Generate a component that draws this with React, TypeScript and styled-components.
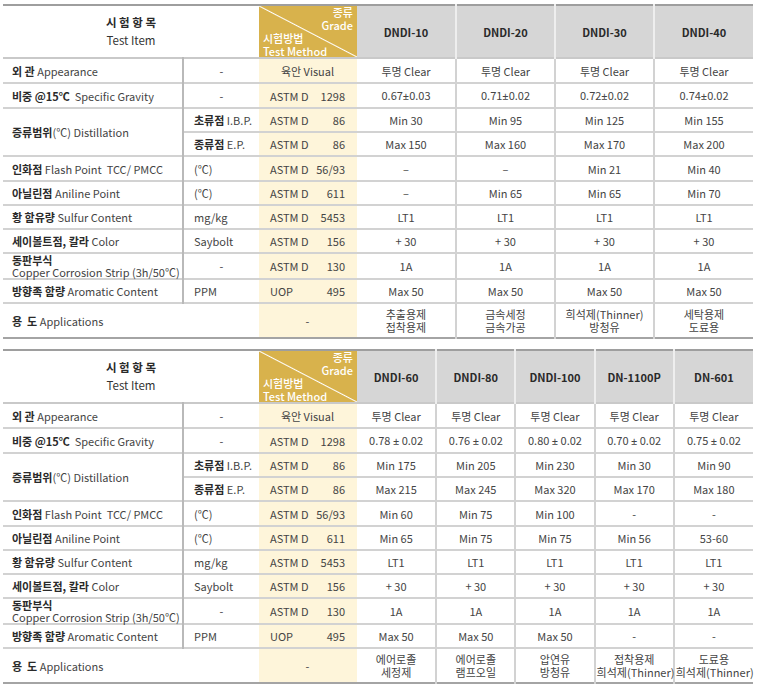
import React from 'react';
import styled, { createGlobalStyle } from 'styled-components';

const Global = createGlobalStyle`
  html, body { margin: 0; padding: 0; background: #fff; }
  body {
    font-family: "Noto Sans CJK KR", "Noto Sans", sans-serif;
    color: #3a3a3a;
    -webkit-font-smoothing: antialiased;
  }
`;

const Page = styled.div`
  width: 750px;
  padding: 4px 0 0 3px;
  display: flex;
  flex-direction: column;
  gap: 10px;
`;

const Table = styled.table`
  width: 750px;
  table-layout: fixed;
  border-collapse: collapse;
  border-top: 2px solid #9e9e9e;
  border-bottom: 2px solid #a4a4a4;
  font-size: 11px;
  line-height: 14px;
`;

const Row = styled.tr<{ $h: number }>`
  height: ${(p) => p.$h}px;
  border-bottom: 2px solid #d2d2d2;
  &:last-child { border-bottom: none; }
`;

const HeadRow = styled.tr`
  height: 51px;
  border-bottom: 2px solid #c9c9c9;
`;

const HeadItem = styled.th`
  font-weight: 400;
  font-size: 11.5px;
  text-align: center;
  line-height: 18px;
  color: #333;
  padding: 0 0 2px 0;
  b { font-weight: 700; color: #2a2a2a; }
`;

const GoldCell = styled.th`
  padding: 0;
  background: linear-gradient(
    to top right,
    #d8b24c calc(50% - 1px),
    #ffffff 50%,
    #d8b24c calc(50% + 1px)
  );
  color: #fff;
  font-weight: 500;
  vertical-align: top;
`;

const GoldInner = styled.div`
  height: 51px;
  box-sizing: border-box;
  padding: 0 4px 0 4px;
  display: flex;
  flex-direction: column;
  justify-content: space-between;
  line-height: 12.5px;
  font-size: 11px;
`;

const GoldTop = styled.div`
  text-align: right;
`;

const GoldBottom = styled.div`
  text-align: left;
`;

const GradeHead = styled.th<{ $first?: boolean }>`
  background: #d6d6d6;
  font-weight: 700;
  font-size: 11px;
  color: #2a2a2a;
  text-align: center;
  border-left: ${(p) => (p.$first ? 'none' : '2px solid #eeeeee')};
`;

const Label = styled.td<{ $divider?: boolean }>`
  padding: 0 0 0 9px;
  text-align: left;
  color: #444;
  white-space: nowrap;
  border-right: ${(p) => (p.$divider ? '2px solid #b9b9b9' : 'none')};
  b { font-weight: 700; color: #2a2a2a; }
`;

const LabelTwo = styled.div`
  line-height: 12px;
`;

const Sub = styled.td<{ $center?: boolean }>`
  padding: ${(p) => (p.$center ? '0' : '0 0 0 10px')};
  text-align: ${(p) => (p.$center ? 'center' : 'left')};
  color: #444;
  white-space: nowrap;
  b { font-weight: 700; color: #2a2a2a; }
`;

const Method = styled.td`
  background: #fef5da;
  padding: 0 12px 0 11px;
  color: #444;
`;

const MethodInner = styled.div<{ $center?: boolean }>`
  display: flex;
  justify-content: ${(p) => (p.$center ? 'center' : 'space-between')};
`;

const Value = styled.td<{ $first?: boolean }>`
  text-align: center;
  color: #444;
  white-space: nowrap;
  border-left: ${(p) => (p.$first ? 'none' : '2px solid #d2d2d2')};
`;

const AppText = styled.div`
  line-height: 13px;
  padding-top: 1px;
`;

const Narrow = styled.span`
  font-family: "Noto Sans", "Liberation Sans", sans-serif;
`;

function withNarrow(v: string): React.ReactNode {
  if (!v.includes('±')) return v;
  const parts = v.split('±');
  return (
    <>
      {parts[0]}
      <Narrow>±</Narrow>
      {parts[1]}
    </>
  );
}

type RowDef = {
  h: number;
  label?: React.ReactNode;
  labelSpan?: number;
  labelRows?: number;
  sub?: React.ReactNode;
  subCenter?: boolean;
  method: [string, string] | string;
  key: string;
  app?: boolean;
};

const rows: RowDef[] = [
  { key: 'appearance', h: 25, label: <><b>외 관</b> Appearance</>, sub: '-', subCenter: true, method: '육안 Visual' },
  { key: 'gravity', h: 25, label: <><b>비중 @15℃</b>&nbsp; Specific Gravity</>, sub: '-', subCenter: true, method: ['ASTM D', '1298'] },
  { key: 'ibp', h: 24, label: <><b>증류범위</b>(℃) Distillation</>, labelRows: 2, sub: <><b>초류점</b> I.B.P.</>, method: ['ASTM D', '86'] },
  { key: 'ep', h: 24, sub: <><b>종류점</b> E.P.</>, method: ['ASTM D', '86'] },
  { key: 'flash', h: 25, label: <><b>인화점</b> Flash Point&nbsp; TCC/ PMCC</>, sub: '(℃)', method: ['ASTM D', '56/93'] },
  { key: 'aniline', h: 24, label: <><b>아닐린점</b> Aniline Point</>, sub: '(℃)', method: ['ASTM D', '611'] },
  { key: 'sulfur', h: 24, label: <><b>황 함유량</b> Sulfur Content</>, sub: 'mg/kg', method: ['ASTM D', '5453'] },
  { key: 'color', h: 24, label: <><b>세이볼트점, 칼라</b> Color</>, sub: 'Saybolt', method: ['ASTM D', '156'] },
  { key: 'copper', h: 26, label: <LabelTwo><b>동판부식</b><br />Copper Corrosion Strip (3h/50℃)</LabelTwo>, sub: '-', subCenter: true, method: ['ASTM D', '130'] },
  { key: 'aromatic', h: 24, label: <><b>방향족 함량</b> Aromatic Content</>, sub: 'PPM', method: ['UOP', '495'] },
  { key: 'app', h: 35, label: <><b>용&nbsp; 도</b> Applications</>, labelSpan: 2, method: '-', app: true },
];

type Spec = {
  grades: string[];
  values: Record<string, string[]>;
};

const spec1: Spec = {
  grades: ['DNDI-10', 'DNDI-20', 'DNDI-30', 'DNDI-40'],
  values: {
    appearance: ['투명 Clear', '투명 Clear', '투명 Clear', '투명 Clear'],
    gravity: ['0.67±0.03', '0.71±0.02', '0.72±0.02', '0.74±0.02'],
    ibp: ['Min 30', 'Min 95', 'Min 125', 'Min 155'],
    ep: ['Max 150', 'Max 160', 'Max 170', 'Max 200'],
    flash: ['–', '–', 'Min 21', 'Min 40'],
    aniline: ['–', 'Min 65', 'Min 65', 'Min 70'],
    sulfur: ['LT1', 'LT1', 'LT1', 'LT1'],
    color: ['+ 30', '+ 30', '+ 30', '+ 30'],
    copper: ['1A', '1A', '1A', '1A'],
    aromatic: ['Max 50', 'Max 50', 'Max 50', 'Max 50'],
    app: ['추출용제\n접착용제', '금속세정\n금속가공', '희석제(Thinner)\n방청유', '세탁용제\n도료용'],
  },
};

const spec2: Spec = {
  grades: ['DNDI-60', 'DNDI-80', 'DNDI-100', 'DN-1100P', 'DN-601'],
  values: {
    appearance: ['투명 Clear', '투명 Clear', '투명 Clear', '투명 Clear', '투명 Clear'],
    gravity: ['0.78 ± 0.02', '0.76 ± 0.02', '0.80 ± 0.02', '0.70 ± 0.02', '0.75 ± 0.02'],
    ibp: ['Min 175', 'Min 205', 'Min 230', 'Min 30', 'Min 90'],
    ep: ['Max 215', 'Max 245', 'Max 320', 'Max 170', 'Max 180'],
    flash: ['Min 60', 'Min 75', 'Min 100', '-', '-'],
    aniline: ['Min 65', 'Min 75', 'Min 75', 'Min 56', '53-60'],
    sulfur: ['LT1', 'LT1', 'LT1', 'LT1', 'LT1'],
    color: ['+ 30', '+ 30', '+ 30', '+ 30', '+ 30'],
    copper: ['1A', '1A', '1A', '1A', '1A'],
    aromatic: ['Max 50', 'Max 50', 'Max 50', '-', '-'],
    app: ['에어로졸\n세정제', '에어로졸\n램프오일', '압연유\n방청유', '접착용제\n희석제(Thinner)', '도료용\n희석제(Thinner)'],
  },
};

function SpecTable({ spec }: { spec: Spec }) {
  const gw = 396 / spec.grades.length;
  return (
    <Table>
      <colgroup>
        <col style={{ width: 180 }} />
        <col style={{ width: 76 }} />
        <col style={{ width: 98 }} />
        {spec.grades.map((g) => (
          <col key={g} style={{ width: gw }} />
        ))}
      </colgroup>
      <thead>
        <HeadRow>
          <HeadItem colSpan={2}>
            <b>시 험 항 목</b>
            <br />
            Test Item
          </HeadItem>
          <GoldCell>
            <GoldInner>
              <GoldTop>
                종류
                <br />
                Grade
              </GoldTop>
              <GoldBottom>
                시험방법
                <br />
                Test Method
              </GoldBottom>
            </GoldInner>
          </GoldCell>
          {spec.grades.map((g, i) => (
            <GradeHead key={g} $first={i === 0}>
              {g}
            </GradeHead>
          ))}
        </HeadRow>
      </thead>
      <tbody>
        {rows.map((r) => (
          <Row key={r.key} $h={r.h}>
            {r.label !== undefined && (
              <Label
                colSpan={r.labelSpan ?? 1}
                rowSpan={r.labelRows ?? 1}
                $divider={!r.labelSpan}
              >
                {r.label}
              </Label>
            )}
            {r.sub !== undefined && <Sub $center={r.subCenter}>{r.sub}</Sub>}
            <Method>
              {typeof r.method === 'string' ? (
                <MethodInner $center>{r.method}</MethodInner>
              ) : (
                <MethodInner>
                  <span>{r.method[0]}</span>
                  <span>{r.method[1]}</span>
                </MethodInner>
              )}
            </Method>
            {spec.values[r.key].map((v, i) =>
              r.app ? (
                <Value key={i} $first={i === 0}>
                  <AppText>
                    {v.split('\n').map((line, j) => (
                      <div key={j}>{line}</div>
                    ))}
                  </AppText>
                </Value>
              ) : (
                <Value key={i} $first={i === 0}>
                  {withNarrow(v)}
                </Value>
              )
            )}
          </Row>
        ))}
      </tbody>
    </Table>
  );
}

export default function App() {
  return (
    <>
      <Global />
      <Page>
        <SpecTable spec={spec1} />
        <SpecTable spec={spec2} />
      </Page>
    </>
  );
}
